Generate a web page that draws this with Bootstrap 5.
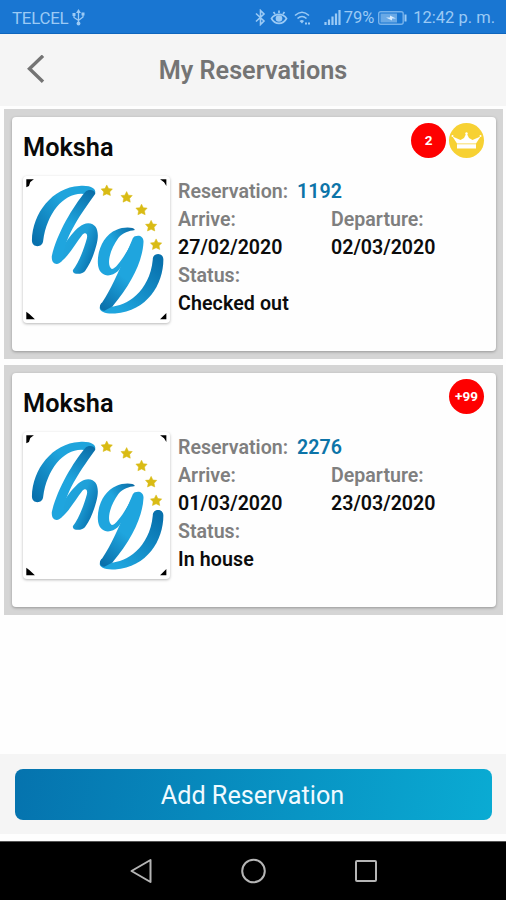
<!DOCTYPE html>
<html lang="en">
<head>
<meta charset="utf-8">
<meta name="viewport" content="width=device-width, initial-scale=1">
<title>My Reservations</title>
<link href="https://cdn.jsdelivr.net/npm/bootstrap@5.3.0/dist/css/bootstrap.min.css" rel="stylesheet">
<style>
body { font-family: Roboto, "Liberation Sans", sans-serif; background: #fefefe; height: 900px; overflow: hidden; }
svg { display: block; flex: none; }
.status-bar { height: 34px; background: #1976d2; color: #9bcaf5; font-size: 16.5px; line-height: 32px; padding: 2px 11px 0 12px; border-bottom: 1px solid #0f66bd; }
.carrier { font-size: 16.9px; letter-spacing: -.25px; }
.wave { margin-left: 6px; }
.signal { margin-left: 13px; }
.percent { margin-left: 3px; }
.battery { margin-left: 4px; }
.clock { margin-left: 6px; }
.title-bar { height: 72px; background: #f5f5f5; padding: 0 26px; }
.title-bar h1 { font-size: 25.2px; font-weight: 600; color: #747474; margin: 2px 0 0; }
.title-side { width: 20px; }
.booking-list { padding: 3px 3px 0 4px; gap: 6px; }
.booking-frame { background: #d5d5d5; padding: 8px 7px 8px 8px; height: 250px; }
.booking { border: 0; border-radius: 4px; height: 234px; padding: 0 12px 0 11px; background: #fefefe; box-shadow: 0 1px 3px rgba(0,0,0,.3); }
.booking-head { height: 59px; padding-top: 6px; gap: 3px; }
.booking-name { font-size: 25.3px; line-height: 30px; font-weight: 600; color: #090909; margin: 10px 0 0; }
.dot { width: 35px; height: 35px; border-radius: 50%; background: #fe0000; color: #fff; font-size: 13.5px; font-weight: 700; flex: none; }
.dot-gold { background: #f7d133; }
.logo-box { width: 147px; height: 147px; background: #fff; border-radius: 4px; box-shadow: 0 1px 3px rgba(0,0,0,.28); flex: none; }
.facts { font-size: 19.6px; line-height: 28.1px; font-weight: 600; color: #0c0c0c; padding: 2px 0 0 8px; }
.facts .term { color: #7f7f7f; }
.facts .num { color: #0c74a8; margin-left: 9px; }
.facts .state { letter-spacing: .1px; }
.col-date { width: 153px; }
.action-bar { height: 80px; background: #f5f5f5; padding: 15px 14px 14px 15px; }
.btn-add { height: 51px; border: 0; border-radius: 8px; color: #f0faff; font-size: 25.2px; line-height: 1; padding: 8px 14px 6px 12px; background: linear-gradient(100deg, #0573ae, #0aabd3); }
.nav-keys { height: 59px; background: #000; border-top: 1px solid #555; margin-top: 7px; padding-bottom: 1px; }
</style>
<script src="https://cdn.jsdelivr.net/npm/bootstrap@5.3.0/dist/js/bootstrap.bundle.min.js"></script>
</head>
<body class="d-flex flex-column">
<svg width="0" height="0" class="position-absolute" aria-hidden="true">
  <defs>
    <linearGradient id="gA" gradientUnits="userSpaceOnUse" x1="50" y1="210" x2="215" y2="60"><stop offset="0" stop-color="#0871ad"/><stop offset=".65" stop-color="#1fa4dc"/><stop offset="1" stop-color="#1fa4dc"/></linearGradient>
    <linearGradient id="gB" gradientUnits="userSpaceOnUse" x1="225" y1="65" x2="150" y2="190"><stop offset="0" stop-color="#0a6ea8"/><stop offset=".8" stop-color="#1fa5de"/></linearGradient>
    <linearGradient id="gC" gradientUnits="userSpaceOnUse" x1="140" y1="200" x2="240" y2="240"><stop offset="0" stop-color="#1fa5de"/><stop offset=".55" stop-color="#1fa0d8"/><stop offset="1" stop-color="#0a76b2"/></linearGradient>
    <linearGradient id="gD" gradientUnits="userSpaceOnUse" x1="350" y1="175" x2="290" y2="215"><stop offset="0" stop-color="#0b6ca5"/><stop offset="1" stop-color="#1fa5de"/></linearGradient>
    <linearGradient id="gE" gradientUnits="userSpaceOnUse" x1="330" y1="330" x2="262" y2="420"><stop offset="0" stop-color="#1fa5de"/><stop offset="1" stop-color="#0a70ab"/></linearGradient>
    <linearGradient id="gF" gradientUnits="userSpaceOnUse" x1="435" y1="280" x2="310" y2="425"><stop offset="0" stop-color="#0871ad"/><stop offset="1" stop-color="#1fa5de"/></linearGradient>
    <path id="star" fill="#d9bb14" stroke="#d9bb14" stroke-width="1.500" stroke-linejoin="round" d="M0-17 5.500-6 17-5 9 4 11 15 0 10-11 15-9 4-17-5-5.500-6Z"/>
    <symbol id="hotel-logo" viewBox="18 18 444 444">
      <path d="M28 28H51L40 36 36 48 28 52ZM432 28H451V48L444 37ZM28 428 37 435 54 451H28ZM451 432V451H432Z"/>
      <path fill="url(#gA)" d="M45 213C46 130 108 52 188 48C222 45 240 56 236 70L214 74C152 57 91 121 79 213C78 236 45 236 45 213Z"/>
      <path fill="url(#gC)" d="M118 262C147 222 178 162 215 161C244 162 249 192 240 226C232 256 222 282 206 304C200 316 164 318 169 302C185 282 201 243 211 206C214 192 207 186 198 195C176 222 160 255 132 278Z"/>
      <path fill="url(#gB)" d="M206 66C169 110 121 190 105 260C103 288 126 289 136 273C144 210 172 160 236 72C238 59 215 56 206 66Z"/>
      <path fill="url(#gD)" d="M356 181C352 171 319 172 301 180C259 196 239 250 245 290C251 324 284 325 305 305L370 220 356 200C340 235 302 300 286 299C269 288 280 240 306 205C320 188 338 184 356 181Z"/>
      <path fill="url(#gF)" d="M410 270C410 248 442 248 442 270C442 345 393 426 296 433C268 435 247 428 250 414L262 408C300 426 399 386 410 270Z"/>
      <path fill="url(#gE)" d="M350 205C359 194 383 195 382 217C379 275 347 342 288 412L264 425C247 424 247 407 257 400C291 350 318 280 350 205Z"/>
      <use href="#star" x="271" y="62"/><use href="#star" x="331" y="82"/><use href="#star" x="376" y="120"/><use href="#star" x="405" y="169"/><use href="#star" x="420" y="225"/>
    </symbol>
  </defs>
</svg>

<header class="status-bar d-flex align-items-center">
  <span class="carrier">TELCEL</span>
  <svg class="ms-1" width="13" height="17" viewBox="0 0 13 17" fill="none" stroke="#9bcaf5" stroke-width="1.300"><path d="M6.500 2V14M2 5V8.500L6.500 11.500 11 8V5"/><path fill="#9bcaf5" stroke="none" d="M6.500 0 9 4H4ZM.5 4h3v3h-3ZM9.500 3.500h3v3h-3Z"/><circle cx="6.500" cy="14.500" r="1.900" fill="#9bcaf5" stroke="none"/></svg>
  <div class="d-flex align-items-center ms-auto">
    <svg width="11" height="17" viewBox="0 0 11 17" fill="none" stroke="#9bcaf5" stroke-width="1.600"><path d="M1 4.500 9 12 5.500 15.500V1.500L9 5 1 12.500"/></svg>
    <svg class="ms-1" width="18" height="17" viewBox="0 0 18 17" fill="none" stroke="#9bcaf5" stroke-width="1.700"><path d="M1.500 9.500C5 4 13 4 16.500 9.500 13 16 5 16 1.500 9.500ZM9 1.500V4M3.500 3 5 5M14.500 3 13 5"/><circle cx="9" cy="9.500" r="3.300" fill="#9bcaf5" stroke="none"/></svg>
    <svg class="wave" width="17" height="17" viewBox="0 0 17 17" fill="none" stroke="#9bcaf5" stroke-width="1.600"><path d="M1 6.500Q8 0 15 6.500M3.500 9.500Q8 5.500 12.500 9.500"/><path d="M5.500 12Q8 10 10 12L8 14.500Z" fill="#9bcaf5" stroke="none"/><path d="M11 14.500h5" stroke-width="2" stroke-dasharray="2 1"/></svg>
    <svg class="signal" width="17" height="17" viewBox="0 0 17 17" stroke="#9bcaf5" stroke-width="2.200"><path d="M1.500 16V13M5 16V10.500M8.500 16V7.500M12 16V4.500M15.500 16V1"/></svg>
    <span class="percent">79%</span>
    <svg class="battery" width="29" height="16" viewBox="0 0 29 16"><rect x=".7" y="1.700" width="24.500" height="12.600" rx="2" fill="none" stroke="#76b2eb" stroke-width="1.400"/><path fill="#69a9e6" d="M2.500 3.500H19V12.500H2.500Z"/><path fill="#d7ecff" d="M8 7.500H12V5.500L18 8.500H14V10.500Z"/><path fill="#9bcaf5" d="M26.500 4.500h2v7h-2Z"/></svg>
    <span class="clock">12:42 p. m.</span>
  </div>
</header>

<div class="title-bar d-flex align-items-center justify-content-between">
  <svg class="title-side" width="20" height="30" viewBox="0 0 20 30" fill="none" stroke="#747474" stroke-width="3.400"><path d="M17 .8 3.500 13.800 17 26.800"/></svg>
  <h1>My Reservations</h1>
  <span class="title-side"></span>
</div>

<main class="booking-list d-flex flex-column flex-grow-1">
  <section class="booking-frame">
    <article class="card booking">
      <div class="booking-head d-flex align-items-start">
        <h2 class="booking-name me-auto">Moksha</h2>
        <span class="dot d-flex align-items-center justify-content-center">2</span>
        <span class="dot dot-gold d-flex align-items-center justify-content-center">
          <svg width="31" height="17" viewBox="0 0 31 17" fill="#fff"><path d="M6 11.500 1.500 4.500 9.500 8 13 6 15.500 1 18 6 21.500 8 29.500 4.500 25 11.500ZM6 12.300H25V16.500H6Z"/><circle cx="15.500" cy="1.500" r="1.200"/><circle cx="1.500" cy="4" r="1"/><circle cx="29.500" cy="4" r="1"/></svg>
        </span>
      </div>
      <div class="d-flex">
        <div class="logo-box"><svg width="147" height="147"><use href="#hotel-logo"/></svg></div>
        <div class="facts">
          <div><span class="term">Reservation:</span><span class="num">1192</span></div>
          <div class="d-flex">
            <div class="col-date"><div class="term">Arrive:</div><div>27/02/2020</div></div>
            <div class="col-date"><div class="term">Departure:</div><div>02/03/2020</div></div>
          </div>
          <div class="term">Status:</div>
          <div class="state">Checked out</div>
        </div>
      </div>
    </article>
  </section>
  <section class="booking-frame">
    <article class="card booking">
      <div class="booking-head d-flex align-items-start">
        <h2 class="booking-name me-auto">Moksha</h2>
        <span class="dot d-flex align-items-center justify-content-center">+99</span>
      </div>
      <div class="d-flex">
        <div class="logo-box"><svg width="147" height="147"><use href="#hotel-logo"/></svg></div>
        <div class="facts">
          <div><span class="term">Reservation:</span><span class="num">2276</span></div>
          <div class="d-flex">
            <div class="col-date"><div class="term">Arrive:</div><div>01/03/2020</div></div>
            <div class="col-date"><div class="term">Departure:</div><div>23/03/2020</div></div>
          </div>
          <div class="term">Status:</div>
          <div class="state">In house</div>
        </div>
      </div>
    </article>
  </section>
</main>

<div class="action-bar d-flex">
  <button type="button" class="btn btn-add w-100">Add Reservation</button>
</div>
<footer class="nav-keys d-flex align-items-center justify-content-center">
  <svg width="250" height="26" viewBox="0 0 250 26" fill="none" stroke="#b5b5b5" stroke-width="2"><path d="M22.500 2V24L3.500 13Z" stroke-linejoin="round"/><circle cx="125.500" cy="13" r="11.300"/><rect x="228" y="3" width="20" height="20" rx="1"/></svg>
</footer>
</body>
</html>
